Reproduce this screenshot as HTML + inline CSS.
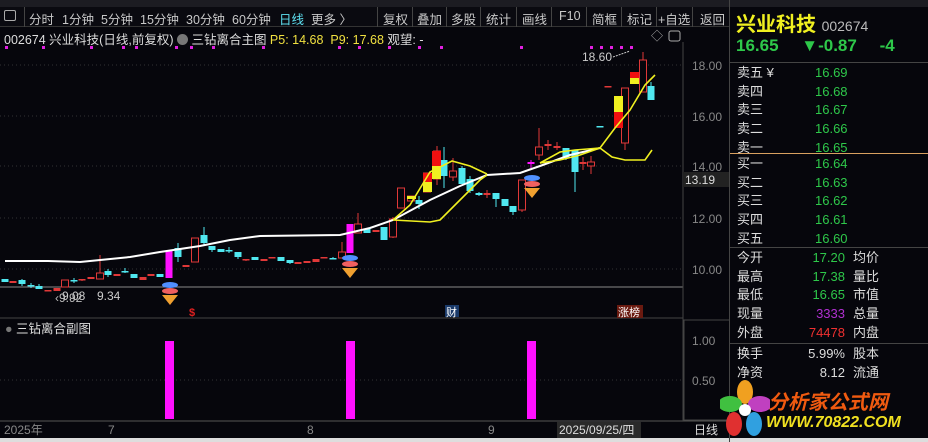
<!DOCTYPE html>
<html><head><meta charset="utf-8"><style>
*{margin:0;padding:0;box-sizing:border-box}
body{width:928px;height:442px;background:#06060c;overflow:hidden;position:relative;font-family:"Liberation Sans","Noto Sans CJK SC",sans-serif;color:#ccc}
.a{position:absolute;white-space:nowrap}
#tb{position:absolute;left:0;top:7px;width:730px;height:20px;background:#0a0a10;border-bottom:1px solid #333;font-size:12.5px;color:#c8c8c8}
#tb span{position:absolute;top:2px}
.sep{position:absolute;top:0;width:1px;height:20px;background:#444}
.rp{font-size:13px}
.g{color:#2ec84a}
</style></head><body>
<div class="a" style="left:0;top:0;width:928px;height:7px;background:#1c1c22"></div>
<div id="tb">
<span style="left:4px;top:3px;width:12px;height:11px;border:1px solid #aaa;border-radius:2px"></span>
<div class="sep" style="left:24px"></div>
<span style="left:29px">分时</span><span style="left:62px">1分钟</span><span style="left:101px">5分钟</span><span style="left:140px">15分钟</span><span style="left:186px">30分钟</span><span style="left:232px">60分钟</span><span style="left:279px;color:#5ee0f0">日线</span><span style="left:311px">更多 〉</span>
<div class="sep" style="left:377px"></div><span style="left:383px">复权</span>
<div class="sep" style="left:412px"></div><span style="left:417px">叠加</span>
<div class="sep" style="left:446px"></div><span style="left:451px">多股</span>
<div class="sep" style="left:480px"></div><span style="left:486px">统计</span>
<div class="sep" style="left:516px"></div><span style="left:522px">画线</span>
<div class="sep" style="left:551px"></div><span style="left:559px">F10</span>
<div class="sep" style="left:586px"></div><span style="left:592px">简框</span>
<div class="sep" style="left:621px"></div><span style="left:627px">标记</span>
<div class="sep" style="left:656px"></div><span style="left:658px">+自选</span>
<div class="sep" style="left:692px"></div><span style="left:700px">返回</span>
</div>
<div class="a" style="left:4px;top:29px;font-size:12.5px;color:#ddd">002674 兴业科技(日线,前复权) <span style="display:inline-block;width:11px;height:11px;border-radius:6px;background:#777;vertical-align:-1px"></span> 三钻离合主图 <span style="color:#f0e040">P5: 14.68 &nbsp;P9: 17.68</span> 观望: -</div>
<svg class="a" style="left:0;top:0" width="730" height="442" id="sv">
<g stroke="#333" stroke-dasharray="1,3">
<line x1="0" y1="65" x2="683" y2="65"/><line x1="0" y1="116" x2="683" y2="116"/><line x1="0" y1="166" x2="683" y2="166"/><line x1="0" y1="218" x2="683" y2="218"/><line x1="0" y1="269" x2="683" y2="269"/><line x1="0" y1="380" x2="683" y2="380"/>
</g>
<line x1="0" y1="287" x2="683" y2="287" stroke="#888"/>
<line x1="0" y1="318" x2="683" y2="318" stroke="#444"/>
<line x1="0" y1="421" x2="730" y2="421" stroke="#555"/>
<line x1="683" y1="42" x2="683" y2="421" stroke="#444"/>
<rect x="684" y="320" width="46" height="100" fill="none" stroke="#444"/>
<g fill="#888" font-size="12"><text x="692" y="70">18.00</text><text x="692" y="121">16.00</text><text x="692" y="171">14.00</text><text x="692" y="223">12.00</text><text x="692" y="274">10.00</text><text x="692" y="345">1.00</text><text x="692" y="385">0.50</text></g>
<rect x="683" y="172" width="47" height="15" fill="#222"/><text x="685" y="184" fill="#ddd" font-size="12">13.19</text>
<g id="c"></g>
<polyline fill="none" stroke="#fff" stroke-width="2" points="5,261 48,261 80,262 130,257 160,252 200,246 230,240 260,236 340,235 370,228 393,220 430,200 460,186 487,175 520,173 540,166 570,155 600,148"/>
<polyline fill="none" stroke="#f0f020" stroke-width="1.6" points="393,220 410,205 430,172 452,161 470,166 487,174"/>
<polyline fill="none" stroke="#f0f020" stroke-width="1.6" points="393,220 430,222 440,220 460,200 480,180 487,175"/>
<polyline fill="none" stroke="#f0f020" stroke-width="1.6" points="540,163 560,152 575,150 600,148 615,128 630,110 645,85 655,75"/>
<polyline fill="none" stroke="#f0f020" stroke-width="1.6" points="540,163 560,160 580,155 600,148 612,157 625,160 645,160 652,150"/>
<text x="582" y="61" fill="#ccc" font-size="12">18.60</text><line x1="613" y1="57" x2="630" y2="51" stroke="#ccc" stroke-dasharray="2,1"/>
<text x="62" y="300" fill="#ccc" font-size="12">9.08</text><text x="55" y="302" fill="#bbb" font-size="12">‹9.92</text><text x="97" y="300" fill="#ccc" font-size="12">9.34</text>
<text x="189" y="316" fill="#e02020" font-size="11" font-weight="bold">$</text>
<rect x="445" y="305" width="14" height="12" fill="#1a3a6a"/><text x="446" y="316" fill="#fff" font-size="11">财</text>
<rect x="617" y="305" width="26" height="13" fill="#6a1a10"/><text x="618" y="316" fill="#fff" font-size="11">涨榜</text>
<text x="5" y="333" fill="#ddd" font-size="12.5"><tspan fill="#777">●</tspan> 三钻离合副图</text>
<rect x="165" y="341" width="9" height="78" fill="#ff10ff"/><rect x="346" y="341" width="9" height="78" fill="#ff10ff"/><rect x="527" y="341" width="9" height="78" fill="#ff10ff"/>
<rect x="557" y="422" width="84" height="16" fill="#2a2a2a"/>
<g fill="#888" font-size="12"><text x="4" y="434">2025年</text><text x="108" y="434">7</text><text x="307" y="434">8</text><text x="488" y="434">9</text><text x="559" y="434" fill="#ddd">2025/09/25/四</text><text x="694" y="434" fill="#ddd">日线</text></g>
<text x="651" y="40" fill="#aaa" font-size="12">◇</text><rect x="669" y="31" width="11" height="10" fill="none" stroke="#aaa" rx="2"/>
</svg>
<div class="a" style="left:0;top:438px;width:928px;height:4px;background:#ddd"></div>
<div class="a" style="left:729px;top:0;width:1px;height:442px;background:#444"></div>
<div class="a" style="left:736px;top:8px;font-size:20px;font-weight:bold;color:#f0f020">兴业科技 <span style="font-size:14px;font-weight:normal;color:#bbb">002674</span></div>
<div class="a g" style="left:736px;top:36px;font-size:17px;font-weight:bold">16.65 <span style="margin-left:18px">▼-0.87</span> <span style="margin-left:18px">-4</span></div>
<div class="a" style="left:730px;top:62px;width:198px;height:1px;background:#444"></div>
<div class="a rp" style="left:737px;top:64px;line-height:18.7px;color:#ddd">卖五 ¥<br>卖四<br>卖三<br>卖二<br>卖一</div>
<div class="a rp g" style="left:815px;top:64px;line-height:18.7px">16.69<br>16.68<br>16.67<br>16.66<br>16.65</div>
<div class="a" style="left:730px;top:153px;width:198px;height:1px;background:#d8a060"></div>
<div class="a rp" style="left:737px;top:155px;line-height:18.7px;color:#ddd">买一<br>买二<br>买三<br>买四<br>买五</div>
<div class="a rp g" style="left:815px;top:155px;line-height:18.7px">16.64<br>16.63<br>16.62<br>16.61<br>16.60</div>
<div class="a" style="left:730px;top:247px;width:198px;height:1px;background:#444"></div>
<div class="a rp" style="left:737px;top:249px;line-height:18.7px;color:#ddd">今开<br>最高<br>最低<br>现量<br>外盘</div>
<div class="a rp" style="left:790px;top:249px;width:55px;text-align:right;line-height:18.7px"><span class="g">17.20</span><br><span class="g">17.38</span><br><span class="g">16.65</span><br><span style="color:#b030d0">3333</span><br><span style="color:#f03030">74478</span></div>
<div class="a rp" style="left:853px;top:249px;line-height:18.7px;color:#ddd">均价<br>量比<br>市值<br>总量<br>内盘</div>
<div class="a" style="left:730px;top:343px;width:198px;height:1px;background:#444"></div>
<div class="a rp" style="left:737px;top:345px;line-height:18.7px;color:#ddd">换手<br>净资</div>
<div class="a rp" style="left:780px;top:345px;width:65px;text-align:right;line-height:18.7px;color:#ddd">5.99%<br>8.12</div>
<div class="a rp" style="left:853px;top:345px;line-height:18.7px;color:#ddd">股本<br>流通</div>
<svg class="a" style="left:720px;top:380px" width="50" height="58">
<ellipse cx="25" cy="12" rx="8" ry="12" fill="#f0a020"/><ellipse cx="40" cy="24" rx="12" ry="8" fill="#c040c0"/><ellipse cx="34" cy="44" rx="8" ry="12" fill="#30a0e0"/><ellipse cx="14" cy="44" rx="8" ry="12" fill="#e03030"/><ellipse cx="10" cy="24" rx="12" ry="8" fill="#40c040"/><circle cx="25" cy="30" r="6" fill="#fff"/>
</svg>
<div class="a" style="left:768px;top:386px;font-size:20px;font-weight:bold;font-style:italic;color:#f05a10">分析家公式网</div>
<div class="a" style="left:766px;top:414px;font-size:16px;font-weight:bold;font-style:italic;color:#f0e020">WWW.70822.COM</div>
<script>
var C="#50e8f0",R="#e03838",d=[
[5,279,282,279,282,C],[13,281,283,281,283,R],[22,280,284,279,286,C],[31,285,286,283,288,C],[39,286,289,284,289,C],[48,290,291,290,291,R],[57,288,291,288,291,R],[65,280,287,280,287,R],[74,280,281,278,283,C],[82,279,280,279,281,R],[91,277,279,277,279,R],[100,273,279,255,279,R],[108,271,275,269,277,C],[117,274,276,274,276,R],[125,271,272,268,273,C],[134,274,278,274,278,C],[143,277,280,277,280,R],[151,274,276,274,276,R],[160,274,277,274,277,C],
[169,251,278,251,278,"#ff10ff"],[178,248,257,243,262,C],[186,265,267,265,267,R],[195,238,262,238,262,R],[204,235,243,227,245,C],[212,246,250,246,252,C],[221,249,252,249,252,C],[229,250,251,247,253,C],[238,252,257,252,259,C],[246,259,260,259,261,R],[255,257,260,257,260,C],[264,259,261,259,261,R],[272,257,258,257,258,R],[281,257,261,257,261,C],[290,260,263,260,264,C],[298,262,264,262,264,R],[307,261,263,261,263,R],[316,259,262,259,262,R],[324,257,258,257,258,R],[333,258,259,257,259,C],[342,252,258,242,258,R],
[350,224,253,224,253,"#ff10ff"],[358,224,233,213,233,R],[367,229,233,229,233,C],[376,230,232,230,232,R],[384,227,240,227,240,C],[393,219,237,217,238,R],[401,188,208,188,208,R],[411,196,201,196,201,R],[419,200,204,196,209,C],[427,173,192,173,192,R],[437,151,179,146,185,R],[444,160,176,147,188,C],[453,171,177,158,181,R],[462,168,184,166,184,C],[470,179,191,176,193,C],[479,193,195,192,196,C],[487,193,195,190,198,R],[496,193,199,193,207,C],[505,199,206,199,206,C],[513,206,212,206,215,C],[522,180,210,180,212,R],[531,162,164,160,168,"#ff10ff"],[539,147,155,128,160,R],[548,144,146,140,150,R],[557,146,148,142,150,R],[566,148,158,148,160,C],[575,150,172,150,192,C],[583,162,164,157,170,R],[591,162,166,156,174,R],[600,126,127,126,127,C],[608,86,87,86,87,R],[625,88,143,88,150,R],[643,60,92,52,92,R],[651,86,100,82,100,C]];
var g=document.getElementById("c"),s="";
d.forEach(function(a){var x=a[0],w=7,f=a[5];s+='<line x1="'+x+'" y1="'+a[3]+'" x2="'+x+'" y2="'+a[4]+'" stroke="'+f+'"/>';
var h=Math.max(a[2]-a[1],1.5);if(f==R&&h>3)s+='<rect x="'+(x-3.5)+'" y="'+a[1]+'" width="'+w+'" height="'+h+'" fill="#06060c" stroke="'+R+'"/>';else s+='<rect x="'+(x-3.5)+'" y="'+a[1]+'" width="'+w+'" height="'+h+'" fill="'+f+'"/>';});
s+='<rect x="614" y="96" width="9" height="16" fill="#f0f020"/><rect x="614" y="112" width="9" height="16" fill="#f01010"/>';
s+='<rect x="630" y="72" width="9" height="6" fill="#f01010"/><rect x="630" y="78" width="9" height="6" fill="#f0f020"/>';
s+='<rect x="423" y="173" width="9" height="9" fill="#f01010"/><rect x="423" y="182" width="9" height="10" fill="#f0f020"/>';
s+='<rect x="432" y="151" width="9" height="15" fill="#f01010"/><rect x="432" y="166" width="9" height="13" fill="#f0f020"/>';
s+='<rect x="407" y="196" width="9" height="3" fill="#f0f020"/>';
[[170,285],[350,258],[532,178]].forEach(function(p){var x=p[0],y=p[1];s+='<ellipse cx="'+x+'" cy="'+y+'" rx="8" ry="3" fill="#5090ff"/><ellipse cx="'+x+'" cy="'+(y+6)+'" rx="8" ry="3" fill="#f06060"/><polygon points="'+(x-8)+','+(y+10)+' '+(x+8)+','+(y+10)+' '+x+','+(y+20)+'" fill="#f0a030"/>';});
for(var i=0;i<20;i++){var xs=[5,42,90,122,135,175,190,212,262,338,358,388,418,440,520,590,600,610,620,630];s+='<rect x="'+xs[i]+'" y="46" width="3" height="3" fill="#e020e0"/>';}
g.innerHTML=s;
</script>
</body></html>
